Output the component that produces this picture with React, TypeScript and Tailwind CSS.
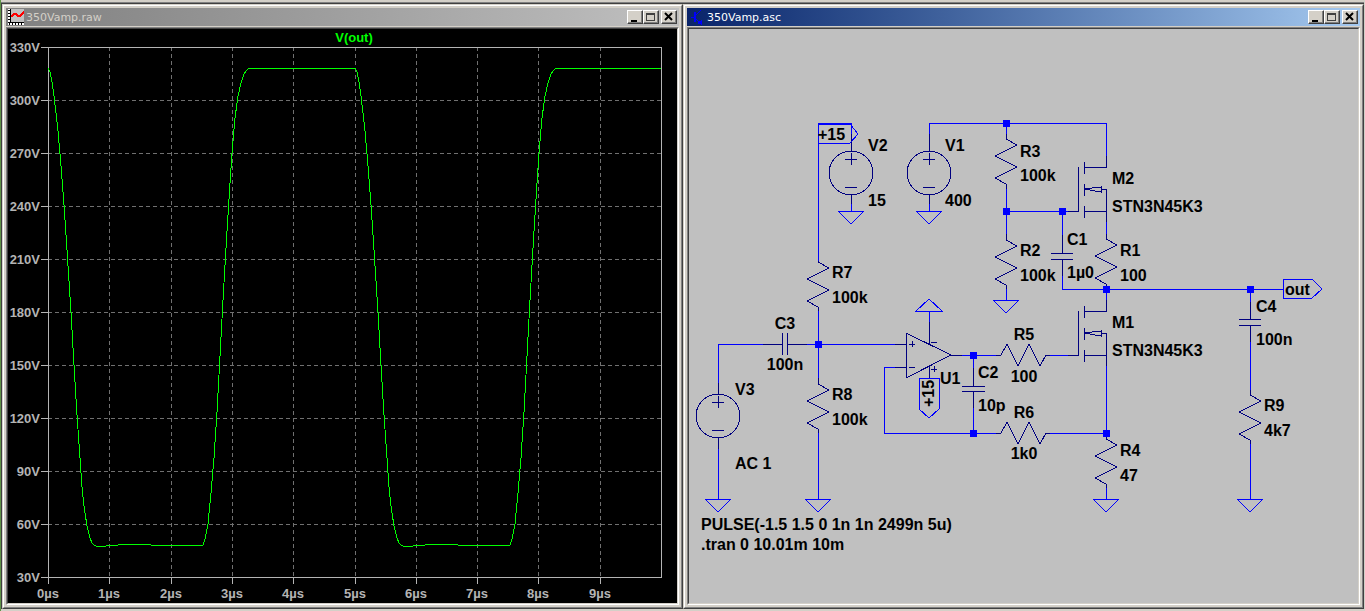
import type { ReactNode } from "react";

type Point = [number, number];

type Label = {
  text: string;
  x: number;
  y: number;
  centered?: boolean;
};

const WIRE = "#0000ff";
const PART = "#000080";

const voltTicks = [330, 300, 270, 240, 210, 180, 150, 120, 90, 60, 30].map((volts, i) => ({
  label: `${volts}V`,
  y: 47 + i * 53,
}));

const timeTicks = [48, 109, 171, 232, 293, 355, 416, 477, 538, 600].map((x, i) => ({
  label: `${i}µs`,
  x,
}));

// one 5µs period of V(out)
const period: Point[] = [
  [0, 68], [2, 72], [4, 82], [6, 96], [8, 113], [10, 131], [13, 166], [16, 205], [19, 250],
  [23, 312], [26, 365], [29, 415], [32, 458], [34, 487], [36, 506], [39, 526], [42, 538],
  [44, 543], [46, 545], [48, 546], [58, 546], [60, 545], [70, 545], [72, 544], [101, 544],
  [103, 545], [155, 545], [157, 539], [160, 524], [163, 493], [166, 458], [169, 412],
  [172, 356], [175, 300], [178, 248], [181, 199], [184, 153], [187, 118], [190, 96],
  [193, 83], [196, 74], [199, 70], [201, 68], [307, 68],
];

const trace = [
  ...period.map(([x, y]) => `${x + 48},${y}`),
  ...period.slice(1, -1).map(([x, y]) => `${x + 355},${y}`),
  "661,68",
].join(" ");

const wires = [
  "M818 261V123H851V134",
  "M929 134V123H1106V156",
  "M1006 123V134",
  "M1006 189V234",
  "M1006 211H1068",
  "M1062 211V235",
  "M1062 276V289H1283",
  "M1106 222V234",
  "M1106 289V300",
  "M1006 289V300",
  "M851 204V211",
  "M929 204V211",
  "M818 311V378",
  "M763 344H718V383",
  "M807 344H895",
  "M895 367H884V433H996",
  "M929 311V322",
  "M962 355H996",
  "M973 355V368",
  "M973 408V433",
  "M1050 355H1068",
  "M1050 433H1106",
  "M1106 366V433",
  "M1106 488V499",
  "M818 433V499",
  "M718 449V499",
  "M1250 289V302",
  "M1250 342V390",
  "M1250 444V499",
];

const flags = [
  "M818 124H850L858 134L850 143H818Z",
  "M1283 279H1312L1322 289L1312 298H1283Z",
  "M919 378H939V409L929 418L919 409Z",
  "M916 311H942L929 299Z",
];

const junctions: Point[] = [
  [1006, 123], [1006, 211], [1062, 211], [1106, 289], [1250, 289],
  [818, 344], [973, 355], [973, 433], [1106, 433],
];

const grounds: Point[] = [
  [851, 211], [929, 211], [1006, 300], [718, 499], [818, 499], [1106, 499], [1250, 499],
];

const resistors: Point[] = [
  [1006, 139], [1006, 240], [1106, 239], [818, 262], [818, 384], [1106, 439], [1250, 395],
];

const flatResistors: Point[] = [[1001, 355], [1001, 433]];

const sources: Point[] = [[851, 173], [929, 173], [718, 416]];

const mosfets: Point[] = [[1106, 189], [1106, 333]];

const labels: Label[] = [
  { text: "+15", x: 818, y: 140 },
  { text: "V2", x: 868, y: 151 },
  { text: "15", x: 868, y: 206 },
  { text: "V1", x: 945, y: 151 },
  { text: "400", x: 945, y: 206 },
  { text: "R3", x: 1020, y: 157 },
  { text: "100k", x: 1020, y: 181 },
  { text: "R2", x: 1020, y: 256 },
  { text: "100k", x: 1020, y: 281 },
  { text: "M2", x: 1112, y: 184 },
  { text: "STN3N45K3", x: 1112, y: 212 },
  { text: "C1", x: 1067, y: 245 },
  { text: "1µ0", x: 1067, y: 278 },
  { text: "R1", x: 1120, y: 256 },
  { text: "100", x: 1120, y: 281 },
  { text: "R7", x: 832, y: 278 },
  { text: "100k", x: 832, y: 303 },
  { text: "C3", x: 785, y: 329, centered: true },
  { text: "100n", x: 785, y: 370, centered: true },
  { text: "V3", x: 735, y: 395 },
  { text: "AC 1", x: 735, y: 469 },
  { text: "R8", x: 832, y: 400 },
  { text: "100k", x: 832, y: 425 },
  { text: "U1", x: 940, y: 384 },
  { text: "C2", x: 978, y: 378 },
  { text: "10p", x: 978, y: 411 },
  { text: "R5", x: 1024, y: 340, centered: true },
  { text: "100", x: 1024, y: 382, centered: true },
  { text: "R6", x: 1024, y: 418, centered: true },
  { text: "1k0", x: 1024, y: 459, centered: true },
  { text: "M1", x: 1112, y: 328 },
  { text: "STN3N45K3", x: 1112, y: 356 },
  { text: "C4", x: 1256, y: 312 },
  { text: "100n", x: 1256, y: 345 },
  { text: "R9", x: 1264, y: 411 },
  { text: "4k7", x: 1264, y: 436 },
  { text: "R4", x: 1120, y: 456 },
  { text: "47", x: 1120, y: 481 },
  { text: "out", x: 1285, y: 295 },
  { text: "PULSE(-1.5 1.5 0 1n 1n 2499n 5u)", x: 701, y: 530 },
  { text: ".tran 0 10.01m 10m", x: 701, y: 550 },
];

const captionButton =
  "flex h-[14px] w-4 items-center justify-center border border-t-white border-l-white border-r-[#404040] border-b-[#404040] bg-[#d4d0c8] shadow-[inset_-1px_-1px_0_#808080]";

function CaptionButtons() {
  return (
    <div className="flex">
      <button type="button" aria-label="Minimize" className={captionButton}>
        <svg width="14" height="12" viewBox="0 0 14 12" shapeRendering="crispEdges">
          <rect x="3" y="9" width="6" height="2" fill="#000" />
        </svg>
      </button>
      <button type="button" aria-label="Maximize" className={captionButton}>
        <svg width="14" height="12" viewBox="0 0 14 12" shapeRendering="crispEdges">
          <path d="M2 2h9v8H2zM3 4v5h7V4z" fill="#404040" fillRule="evenodd" />
        </svg>
      </button>
      <button type="button" aria-label="Close" className={`${captionButton} ml-0.5`}>
        <svg width="14" height="12" viewBox="0 0 14 12">
          <path d="M3 2L10 9M10 2L3 9" stroke="#000" strokeWidth="2" />
        </svg>
      </button>
    </div>
  );
}

type WindowProps = {
  title: string;
  icon: ReactNode;
  barClass: string;
  clientClass: string;
  children: ReactNode;
};

function Window({ title, icon, barClass, clientClass, children }: WindowProps) {
  return (
    <section className="border border-t-[#d4d0c8] border-l-[#d4d0c8] border-r-[#404040] border-b-[#404040]">
      <div className="border border-t-white border-l-white border-r-[#808080] border-b-[#808080] bg-[#d4d0c8] p-0.5">
        <header className={`flex h-[18px] items-center pr-0.5 ${barClass}`}>
          {icon}
          <h2 className="flex-1 pt-0.5 text-[11px] leading-4 font-normal">{title}</h2>
          <CaptionButtons />
        </header>
        <div className="mt-px border border-t-[#808080] border-l-[#808080] border-r-white border-b-white">
          <div
            className={`border border-t-[#404040] border-l-[#404040] border-r-[#d4d0c8] border-b-[#d4d0c8] ${clientClass}`}
          >
            {children}
          </div>
        </div>
      </div>
    </section>
  );
}

function WaveIcon() {
  return (
    <svg className="ml-0.5 mr-0.5" width="16" height="16" viewBox="0 0 16 16" shapeRendering="crispEdges">
      <rect width="16" height="16" fill="#c0c0c0" />
      <rect width="3" height="16" fill="#fff" />
      <rect y="13" width="16" height="3" fill="#fff" />
      <path d="M2 0H3V13H16V14H2Z" fill="#000" />
      <path
        d="M0 1h2v1H0zM0 4h2v1H0zM0 7h2v1H0zM0 10h2v1H0zM0 13h2v1H0zM1 14h1v2H1zM4 14h1v2H4zM7 14h1v2H7zM10 14h1v2H10zM13 14h1v2H13z"
        fill="#000"
      />
      <path d="M3 8L6 5H8L10 7H12L16 3" fill="none" stroke="#f00" strokeWidth="2" />
    </svg>
  );
}

function TransistorIcon() {
  return (
    <svg className="ml-1 mr-0.5" width="14" height="16" viewBox="0 0 14 16" shapeRendering="crispEdges">
      <path d="M0 8H3M5 6L10 1M5 10L9 14" fill="none" stroke={WIRE} />
      <rect x="3" y="3" width="2" height="10" fill={WIRE} />
      <path d="M11 16V11L6 14Z" fill={WIRE} />
    </svg>
  );
}

function WavePlot() {
  return (
    <svg className="block h-auto w-full" viewBox="8 29 669 574" role="img" aria-label="V(out) waveform">
      <g fill="none" stroke="#b4b4b4" shapeRendering="crispEdges">
        <g stroke="#707070" strokeDasharray="4 3">
          {voltTicks.slice(1, -1).map((tick) => (
            <path key={tick.label} d={`M48 ${tick.y}H661`} />
          ))}
          {timeTicks.slice(1).map((tick) => (
            <path key={tick.label} d={`M${tick.x} 47V577`} />
          ))}
        </g>
        <rect x="48" y="47" width="613" height="530" />
        {voltTicks.map((tick) => (
          <path key={tick.label} d={`M41 ${tick.y}H48`} />
        ))}
        {timeTicks.map((tick) => (
          <path key={tick.label} d={`M${tick.x} 577V584`} />
        ))}
        <polyline points={trace} stroke="#00ff00" />
      </g>
      <g className="font-['Liberation_Sans',sans-serif] text-[13px] font-bold" fill="#b4b4b4">
        {voltTicks.map((tick) => (
          <text key={tick.label} x="40" y={tick.y + 5} textAnchor="end">
            {tick.label}
          </text>
        ))}
        {timeTicks.map((tick) => (
          <text key={tick.label} x={tick.x} y="598" textAnchor="middle">
            {tick.label}
          </text>
        ))}
        <text x="354" y="42" textAnchor="middle" fill="#00ff00">
          V(out)
        </text>
      </g>
    </svg>
  );
}

function Schematic() {
  return (
    <svg className="block h-auto w-full" viewBox="689 29 669 574" role="img" aria-label="Amplifier schematic">
      <g fill="none" stroke={PART} shapeRendering="crispEdges">
        {resistors.map(([x, y]) => (
          <path
            key={`${x}-${y}`}
            transform={`translate(${x} ${y})`}
            d="M0 -6V0L11 6L-11 17L11 28L-11 39L0 45V50"
          />
        ))}
        {flatResistors.map(([x, y]) => (
          <path
            key={y}
            transform={`translate(${x} ${y})`}
            d="M-6 0H0L6 -11L17 11L28 -11L39 11L45 0H50"
          />
        ))}
        {sources.map(([x, y]) => (
          <g key={`${x}-${y}`} transform={`translate(${x} ${y})`}>
            <circle r="22" />
            <path d="M0 -39V-22M0 22V33M-6 -14H6M0 -20V-8M-6 14H6" />
          </g>
        ))}
        {mosfets.map(([x, y]) => (
          <path
            key={y}
            transform={`translate(${x} ${y})`}
            d="M0 -33V-22H-22M-22 -27V-15M-22 -5V7M-22 17V29M-22 22H0M0 33V0H-5M-22 0L-5 -2V3L-22 0M-28 -22V22H-38"
          />
        ))}
        {/* C1, C2, C4, C3 */}
        <path d="M1062 235V253M1051 253H1073M1051 259H1073M1062 259V276" />
        <path d="M973 368V386M962 386H985M962 391H985M973 391V408" />
        <path d="M1250 302V319M1239 319H1261M1239 325H1261M1250 325V342" />
        <path d="M763 344H782M782 333V355M787 333V355M787 344H807" />
        {/* U1 */}
        <path d="M895 344H906M895 367H906M906 333V378L951 355ZM951 355H962M929 322V344M929 367V378" />
        <path d="M909 344H915M912 341V347M909 367H915M931 342H937M931 369H937M934 366V372" />

        <g stroke={WIRE}>
          {wires.map((d) => (
            <path key={d} d={d} />
          ))}
          {flags.map((d) => (
            <path key={d} d={d} />
          ))}
          {grounds.map(([x, y]) => (
            <path key={`${x}-${y}`} d={`M${x - 13} ${y}H${x + 13}L${x} ${y + 13}Z`} />
          ))}
        </g>
      </g>
      <g fill={WIRE} shapeRendering="crispEdges">
        {junctions.map(([x, y]) => (
          <rect key={`${x}-${y}`} x={x - 3} y={y - 3} width="7" height="7" />
        ))}
      </g>
      <g className="font-['Liberation_Sans',sans-serif] text-[16px] font-bold" fill="#000">
        {labels.map(({ text, x, y, centered }) => (
          <text key={`${x}-${y}`} x={x} y={y} textAnchor={centered ? "middle" : "start"}>
            {text}
          </text>
        ))}
        <text transform="translate(934 407) rotate(-90)">+15</text>
      </g>
    </svg>
  );
}

export default function App() {
  return (
    <main className="min-h-screen border-l border-[#5f9347] bg-[#d4d0c8] font-['DejaVu_Sans',sans-serif]">
      <div className="pt-0.5 pr-px">
        <div className="border-t border-[#808080]">
          <div className="grid grid-cols-2 border-t border-l border-[#404040]">
            <Window
              title="350Vamp.raw"
              icon={<WaveIcon />}
              barClass="bg-linear-to-r from-[#808080] to-[#c0c0c0] text-[#d4d0c8]"
              clientClass="bg-black"
            >
              <WavePlot />
            </Window>
            <Window
              title="350Vamp.asc"
              icon={<TransistorIcon />}
              barClass="bg-linear-to-r from-[#0a246a] to-[#a6caf0] text-white"
              clientClass="bg-[#c0c0c0]"
            >
              <Schematic />
            </Window>
          </div>
        </div>
      </div>
    </main>
  );
}
